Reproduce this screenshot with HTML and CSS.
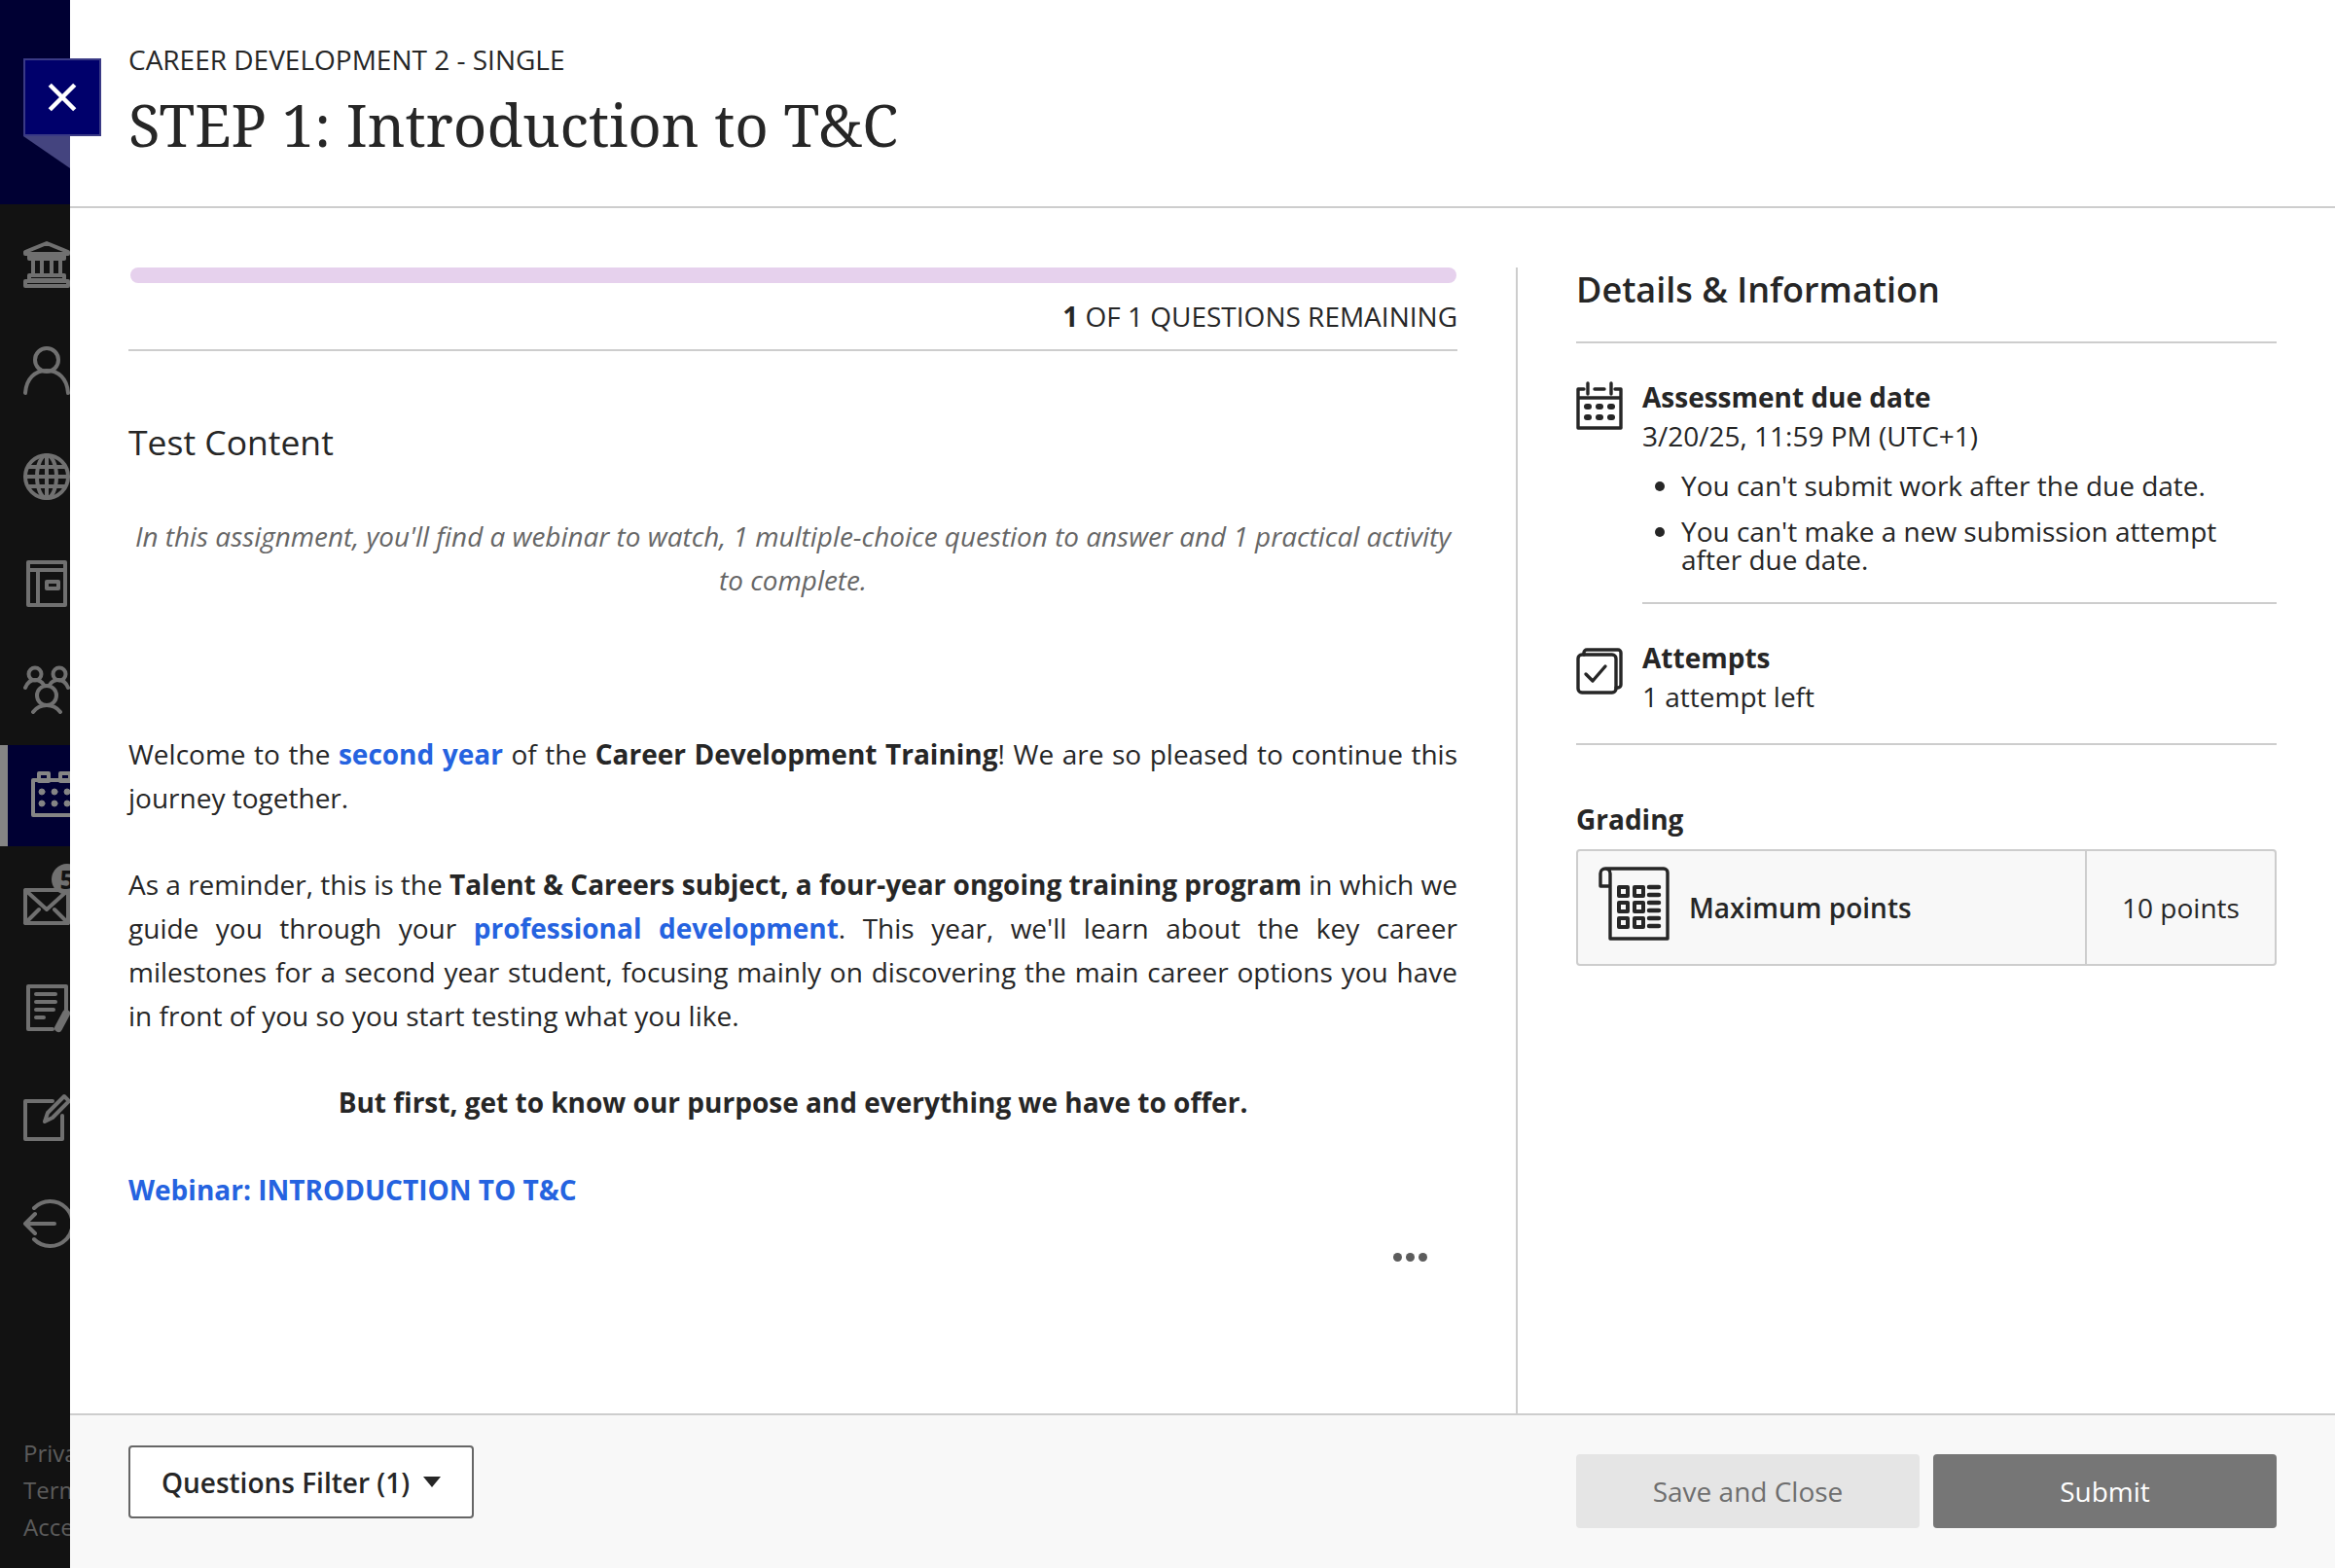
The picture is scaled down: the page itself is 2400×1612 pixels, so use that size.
FILE: index.html
```html
<!DOCTYPE html>
<html lang="en">
<head>
<meta charset="utf-8">
<title>STEP 1: Introduction to T&amp;C</title>
<link rel="stylesheet" href="styles.css">
</head>
<body>
<div class="app">
  <nav class="rail">
    <div class="rail-top"></div>
    <div class="rail-items">
      <div class="nav-item"><svg class="ni" viewBox="0 0 48 48"><path d="M2 11 24 2l22 9v2H2zM6 14h36v4H6zM10 18v16M19 18v16M29 18v16M38 18v16M6 35h36v5H6zM2 41h44v5H2z"/></svg></div>
      <div class="nav-item"><svg class="ni" viewBox="0 0 48 48"><circle cx="24" cy="13" r="12"/><path d="M2 47c1-15 10-23 22-23s21 8 22 23"/></svg></div>
      <div class="nav-item"><svg class="ni" viewBox="0 0 48 48"><circle cx="24" cy="24" r="22"/><ellipse cx="24" cy="24" rx="10" ry="22"/><path d="M24 2v44M5 14h38M2 24h44M5 34h38"/></svg></div>
      <div class="nav-item"><svg class="ni" viewBox="0 0 48 48"><path d="M5 2h38v44H5zM5 10h38M15 10v36M24 22h12v7H24z"/></svg></div>
      <div class="nav-item"><svg class="ni" viewBox="0 0 48 48"><circle cx="12" cy="8" r="6.5"/><circle cx="37" cy="8" r="6.5"/><circle cx="24" cy="30" r="10"/><path d="M2 22c2-5 6-8 10-8s7 2 9 5M46 22c-2-5-6-8-10-8s-7 2-9 5M10 47c3-4 8-7 14-7s11 3 14 7"/></svg></div>
      <div class="nav-item active"><svg class="ni" viewBox="0 0 48 48"><path d="M2 8h44v36H2zM8 1h10v8H8zM30 1h10v8H30z"/><g class="dots"><circle cx="11" cy="20" r="3"/><circle cx="24" cy="20" r="3"/><circle cx="37" cy="20" r="3"/><circle cx="11" cy="32" r="3"/><circle cx="24" cy="32" r="3"/><circle cx="37" cy="32" r="3"/></g></svg></div>
      <div class="nav-item mail"><svg class="ni" viewBox="0 0 48 48"><path d="M2 12h44v34H2zM2 12l22 20 22-20M2 46l14-14M46 46 32 32"/></svg><span class="badge">5</span></div>
      <div class="nav-item"><svg class="ni" viewBox="0 0 48 48"><path d="M44 28V2H5v44h25M13 10h20M13 18h20M13 26h18M13 34h8"/><path class="thick" d="M36 45 44 30"/></svg></div>
      <div class="nav-item late"><svg class="ni" viewBox="0 0 48 48"><path d="M2 7h28M40 22v24H2V7M22 28l3-9L42 2l5 5-17 17z"/></svg></div>
      <div class="nav-item"><svg class="ni" viewBox="0 0 48 48"><path d="M11 8A23 23 0 1 1 11 40M3 24h29M12 14 2 24l10 10"/></svg></div>
    </div>
    <div class="rail-links"><span>Privacy</span><span>Terms</span><span>Accessibility</span></div>
  </nav>
  <div class="close-flag"></div>
  <button class="close" aria-label="Close"><svg viewBox="0 0 24 24"><path d="M3 3 21 21M21 3 3 21"/></svg></button>

  <main class="panel">
    <header class="head">
      <div class="crumb">CAREER DEVELOPMENT 2 - SINGLE</div>
      <h1>STEP 1: Introduction to T&amp;C</h1>
    </header>

    <div class="body">
      <section class="left">
        <div class="progress"></div>
        <div class="remain"><b>1</b> OF 1 QUESTIONS REMAINING</div>
        <h2 class="test">Test Content</h2>
        <p class="intro">In this assignment, you'll find a webinar to watch, 1 multiple-choice question to answer and 1 practical activity to complete.</p>
        <p class="copy just first">Welcome to the <a>second year</a> of the <b>Career Development Training</b>! We are so pleased to continue this journey together.</p>
        <p class="copy just">As a reminder, this is the <b>Talent &amp; Careers subject, a four-year ongoing training program</b> in which we guide you through your <a>professional development</a>. This year, we'll learn about the key career milestones for a second year student, focusing mainly on discovering the main career options you have in front of you so you start testing what you like.</p>
        <p class="copy center"><b>But first, get to know our purpose and everything we have to offer.</b></p>
        <p class="copy"><a>Webinar: INTRODUCTION TO T&amp;C</a></p>
        <div class="more"><i></i><i></i><i></i></div>
      </section>

      <aside class="right">
        <h2 class="det">Details &amp; Information</h2>
        <div class="info due">
          <svg class="ic" viewBox="0 0 48 48"><path d="M8 6H2v40h44V6h-6M2 15h44M12 0v11M36 0v11M19 6h10"/><g class="fill"><rect x="8" y="21" width="8" height="6" rx="3"/><rect x="20" y="21" width="8" height="6" rx="3"/><rect x="32" y="21" width="8" height="6" rx="3"/><rect x="8" y="32" width="8" height="6" rx="3"/><rect x="20" y="32" width="8" height="6" rx="3"/><rect x="32" y="32" width="8" height="6" rx="3"/></g></svg>
          <div class="info-text">
            <h3>Assessment due date</h3>
            <div>3/20/25, 11:59 PM (UTC+1)</div>
            <ul>
              <li>You can't submit work after the due date.</li>
              <li>You can't make a new submission attempt after due date.</li>
            </ul>
          </div>
        </div>
        <div class="info att">
          <svg class="ic" viewBox="0 0 48 48"><path d="M8 7V5a3 3 0 0 1 3-3h32a3 3 0 0 1 3 3v33a3 3 0 0 1-3 3h-2"/><rect x="2" y="7" width="39" height="39" rx="4"/><path d="M10 27l7 7 13-15"/></svg>
          <div class="info-text">
            <h3>Attempts</h3>
            <div>1 attempt left</div>
          </div>
        </div>
        <h3 class="gr">Grading</h3>
        <div class="grade">
          <div class="g-main">
            <svg class="ic2" viewBox="0 0 74 76"><path d="M12 20H3V7a5 5 0 0 1 10 0v67h59V6a4 4 0 0 0-4-4H8"/><path class="hollow" d="M22 21h9v9h-9zM38 21h9v9h-9zM22 37h9v9h-9zM38 37h9v9h-9zM22 53h9v9h-9zM38 53h9v9h-9z"/><path class="dash" d="M53 21h10M53 29h10M53 37h10M53 45h10M53 53h10M53 61h10"/></svg>
            <span>Maximum points</span>
          </div>
          <div class="g-val">10 points</div>
        </div>
      </aside>
    </div>

    <footer class="foot">
      <button class="filter">Questions Filter (1)<span class="caret"></span></button>
      <div class="actions">
        <button class="save">Save and Close</button>
        <button class="submit">Submit</button>
      </div>
    </footer>
  </main>
</div>
</body>
</html>
```
FILE: styles.css
```css
* { box-sizing: border-box; }
html, body { margin: 0; height: 100%; }
body { font-family: "Open Sans", "Noto Sans", sans-serif; color: #262626; background: #fff; overflow: hidden; }
.app { display: flex; width: 2400px; height: 1612px; position: relative; overflow: hidden; }

.rail { width: 72px; flex: none; background: #121212; display: flex; flex-direction: column; overflow: hidden; }
.rail-top { height: 210px; flex: none; background: #000033; }
.rail-items { display: flex; flex-direction: column; gap: 5.2px; padding-top: 10px; }
.nav-item { height: 104px; flex: none; padding: 28px 0 0 24px; position: relative; }
.nav-item.late { margin-top: 3px; }
.nav-item.active { background: #000033; border-left: 8px solid #858585; }
.ni { width: 48px; height: 48px; display: block; overflow: visible; fill: none; stroke: #707070; stroke-width: 4; stroke-linejoin: round; stroke-linecap: round; }
.ni .dots { fill: #858585; stroke: #858585; stroke-width: 1; }
.ni .thick { stroke-width: 8; }
.active .ni { stroke: #858585; }
.badge { position: absolute; left: 53px; top: 13px; width: 32px; height: 32px; border-radius: 50%; background: #707070; color: #121212; font-size: 26px; font-weight: 700; text-align: center; line-height: 32px; }
.rail-links { margin-top: auto; padding: 0 0 26px 24px; display: flex; flex-direction: column; gap: 6px; color: #5c5c5c; font-size: 24px; line-height: 32px; white-space: nowrap; }

.close-flag { position: absolute; left: 24px; top: 140px; width: 48px; height: 33px; background: #44447f; clip-path: polygon(0 0, 100% 100%, 100% 0); }
.close { position: absolute; left: 24px; top: 60px; width: 80px; height: 80px; padding: 21px; background: #00006b; border: 2px solid #3a3a85; }
.close svg { display: block; width: 100%; height: 100%; fill: none; stroke: #fff; stroke-width: 3.2; }

.panel { flex: 1; min-width: 0; display: flex; flex-direction: column; background: #fff; }
.head { height: 214px; flex: none; padding: 43px 60px 0; border-bottom: 2px solid #cdcdcd; }
.crumb { font-size: 28px; line-height: 36px; }
h1 { margin: 13px 0 0; font: 400 60px/72px "Noto Serif", "DejaVu Serif", "Liberation Serif", serif; color: #262626; }

.body { flex: 1; min-height: 0; display: flex; padding-top: 61px; }
.left { width: 1488px; flex: none; padding: 0 60px 0 60px; border-right: 2px solid #cdcdcd; position: relative; }
.progress { height: 16px; margin: 0 1px 0 2px; border-radius: 8px; background: #e6d1ed; }
.remain { height: 70px; padding-top: 15px; text-align: right; font-size: 28px; line-height: 38px; border-bottom: 2px solid #cdcdcd; }
.test { margin: 70px 0 0; font-size: 35.5px; line-height: 46px; font-weight: 400; }
.intro { margin: 52px 0 0; text-align: center; font-style: italic; font-size: 27.9px; line-height: 45px; color: #666; }
.copy { font-size: 28px; line-height: 44.8px; margin: 44.8px 0 0; }
.just { text-align: justify; }
.copy.first { margin-top: 134px; }
.center { text-align: center; }
a { color: #2563e0; font-weight: 700; }
.more { position: absolute; left: 1360px; top: 1013px; display: flex; gap: 4px; }
.more i { width: 9px; height: 9px; border-radius: 50%; background: #5c5c5c; }

.right { flex: 1; padding: 0 60px; min-width: 0; }
.det { margin: 0; font-size: 36px; line-height: 46px; font-weight: 600; height: 78px; padding-top: 0; border-bottom: 2px solid #cdcdcd; }
.info { display: flex; gap: 20px; }
.ic { width: 48px; height: 48px; flex: none; overflow: visible; fill: none; stroke: #262626; stroke-width: 3.4; stroke-linejoin: round; stroke-linecap: round; }
.ic .fill { fill: #262626; stroke: none; }
.info-text { flex: 1; font-size: 28px; line-height: 40px; }
h3 { margin: 0; font-size: 28px; line-height: 40px; font-weight: 700; }
.due { margin-top: 35px; }
.due .ic { margin-top: 6px; }
.due .info-text { border-bottom: 2px solid #cdcdcd; height: 233px; }
.due ul { margin: 17px 0 0; padding: 0 0 0 40px; list-style: disc; }
.due li { line-height: 29px; margin-bottom: 18px; }
.att { margin-top: 35px; height: 110px; border-bottom: 2px solid #cdcdcd; }
.att .ic { margin-top: 10px; }
.gr { margin-top: 56px; }
.grade { margin-top: 11px; height: 120px; display: flex; border: 2px solid #cdcdcd; border-radius: 4px; font-size: 28px; background: #f8f8f8; }
.g-main { flex: 1; display: flex; align-items: center; padding-left: 20px; gap: 20px; font-weight: 600; }
.ic2 { width: 74px; height: 76px; margin-bottom: 8px; fill: none; stroke: #262626; stroke-width: 3.4; stroke-linejoin: round; }
.ic2 .hollow { stroke-width: 4; }
.ic2 .dash { stroke-width: 4.5; stroke-linecap: round; }
.g-val { width: 195px; border-left: 2px solid #cdcdcd; display: flex; align-items: center; justify-content: center; }

.foot { height: 159px; flex: none; background: #f8f8f8; border-top: 2px solid #cdcdcd; display: flex; justify-content: space-between; padding: 0 60px; }
button { font-family: inherit; font-size: 28px; cursor: pointer; }
.filter { margin: 31px 0 0 0; width: 355px; height: 75px; background: #fff; border: 2px solid #666; border-radius: 4px; font-weight: 600; color: #262626; display: flex; align-items: center; justify-content: center; gap: 14px; padding: 0; }
.caret { width: 0; height: 0; border-left: 9px solid transparent; border-right: 9px solid transparent; border-top: 11px solid #262626; }
.actions { display: flex; gap: 14px; margin-top: 40px; }
.save, .submit { width: 353px; height: 76px; border: 0; border-radius: 4px; }
.save { background: #e5e5e5; color: #6e6e6e; }
.submit { background: #767676; color: #fff; }
```
